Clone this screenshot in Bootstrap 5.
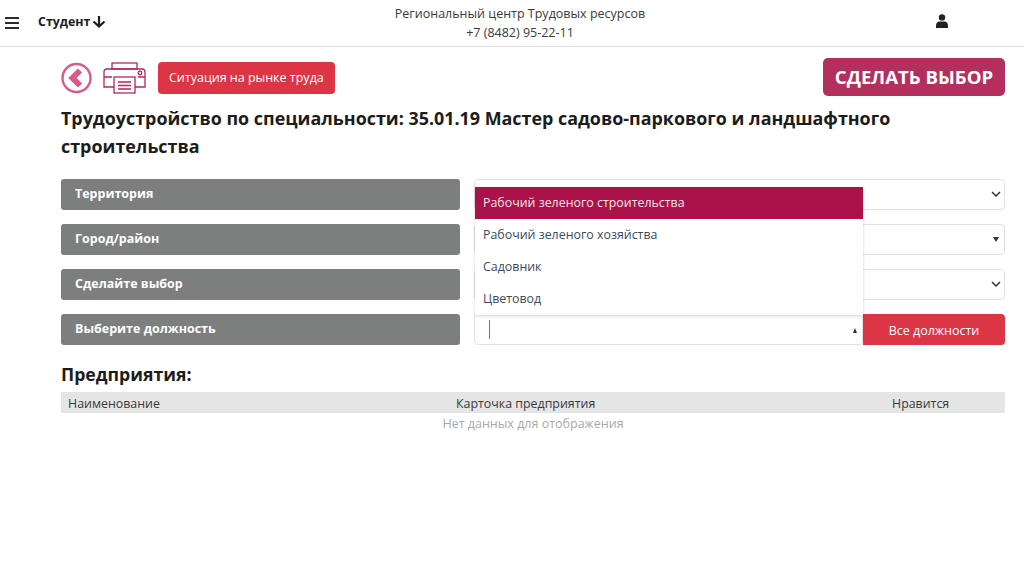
<!DOCTYPE html>
<html lang="ru">
<head>
<meta charset="utf-8">
<title>Трудоустройство</title>
<link href="https://cdn.jsdelivr.net/npm/bootstrap@5.3.0/dist/css/bootstrap.min.css" rel="stylesheet">
<style>
body{font-family:"Open Sans","Noto Sans",sans-serif;background:#fff;color:#212529;font-size:13px;overflow:hidden}
.topbar{height:47px;border-bottom:1px solid #dedede;padding:0 0 0 5px}
.burger{width:14px;margin-right:19px}
.student{font-weight:700;font-size:12.4px;color:#1c1c1c;width:66px;flex:none;white-space:nowrap;margin-top:-2px}
.arrow-down{margin-left:2px;flex:none}
.org{width:0;flex:1 1 auto;text-align:center;font-size:12.5px;line-height:19.500px;color:#3a3a3a;white-space:nowrap}
.usercell{width:88px;flex:none;margin-top:-5px}
.pagebox{padding:11px 19px 0 61px}
.toolrow{height:38px;margin-bottom:8px}
.gap-print{margin-left:11px}
.gap-sit{margin-left:11px}
.btn-sit{background:#dc3545;color:#fff;font-size:12.5px;padding:0 11px;height:32px;line-height:32px;border-radius:4px;border:0}
.btn-make{background:#b42e5e;color:#fff;font-weight:700;font-size:18.6px;height:38px;line-height:38px;padding:0;width:182px;border-radius:5px;border:0}
.title{font-size:17.9px;font-weight:700;line-height:28px;margin:0 0 19px;color:#1c1c1c}
.frow{height:31px;margin-bottom:14px}
.flabel{width:399px;background:#7d7e7e;color:#fff;font-weight:700;font-size:12.5px;border-radius:3px;padding:0 14px;line-height:29px;flex:none}
.fctl{margin-left:14px;flex:1 1 auto;border:1px solid #dfe2e5;border-radius:4px;background:#fff;position:relative}
.chev{position:absolute;right:3px;top:11px}
.tri{position:absolute;right:5px;top:12px;width:0;height:0;border-left:3px solid transparent;border-right:3px solid transparent;border-top:5px solid #333}
.fgroup{margin-left:14px;flex:1 1 auto;position:relative}
.combo{width:389px;height:31px;background:#fff;border:1px solid #dfe2e5;border-radius:0 0 4px 4px;position:relative;flex:none}
.caret{position:absolute;left:14px;top:5px;width:1px;height:19px;background:#777}
.triup{position:absolute;right:5px;top:13px;width:0;height:0;border-left:2.500px solid transparent;border-right:2.500px solid transparent;border-bottom:5px solid #333}
.btn-all{flex:1 1 auto;background:#dc3545;color:#fff;font-size:12.5px;border:0;border-radius:0 4px 4px 0;padding:3px 0 0}
.droplist{position:absolute;left:1px;bottom:30px;width:388px;background:#fff;box-shadow:0 1px 3px rgba(0,0,0,.18);z-index:5}
.dropit{height:32px;line-height:31px;padding:0 8px;font-size:12.4px;color:#3d4a5c}
.dropit-on{background:#ab1249;color:#f3e3ea;line-height:32px}
.subtitle{font-size:17.7px;font-weight:700;line-height:26px;margin:16px 0 5px;color:#1c1c1c}
.thead-bar{background:#e5e5e5;height:21px;line-height:23px;font-size:12.4px;color:#3a3a3a}
.th1{padding-left:7px;width:395px;flex:none}
.th2{width:436px;flex:none}
.nodata{text-align:center;color:#a9a9a9;font-size:12.5px;line-height:21px}
</style>
</head>
<body>
<nav class="topbar d-flex align-items-center">
  <svg class="burger flex-none" viewBox="0 0 14 12" height="12" aria-hidden="true"><path d="M0 1h14M0 6h14M0 11h14" stroke="#2a2a2a" stroke-width="2"/></svg>
  <div class="student d-flex align-items-center"><span>Студент</span>
    <svg class="arrow-down" width="14" height="13" viewBox="0 0 14 13" aria-hidden="true"><path d="M7 1v10M1.500 6.500L7 11.500l5.500-5" fill="none" stroke="#1c1c1c" stroke-width="2.200"/></svg>
  </div>
  <div class="org"><div>Региональный центр Трудовых ресурсов</div><div>+7 (8482) 95-22-11</div></div>
  <div class="usercell d-flex">
    <svg width="12" height="14" viewBox="0 0 12 14" aria-hidden="true"><circle cx="6" cy="3.400" r="3.200" fill="#222"/><path d="M0 14v-2.600C0 9 1.800 7.600 3.600 7.600h4.800C10.200 7.600 12 9 12 11.400V14z" fill="#222"/></svg>
  </div>
</nav>
<main class="pagebox">
  <div class="toolrow d-flex align-items-start justify-content-between">
    <div class="d-flex align-items-start pt-1">
      <svg width="31" height="32" viewBox="0 0 31 32" aria-hidden="true"><circle cx="15.500" cy="16" r="14" fill="#fff" stroke="#d75c8a" stroke-width="2.400"/><path d="M19 8.500L11.500 16 19 23.500" fill="none" stroke="#d75c8a" stroke-width="6"/></svg>
      <svg class="gap-print" width="44" height="32" viewBox="0 0 44 32" aria-hidden="true"><g fill="none" stroke="#b8255f" stroke-width="1.300"><rect x="9" y="1" width="25" height="6"/><path d="M11 25H1V10q0-3 3-3h35q3 0 3 3v15H32"/><path d="M1 15h8M35 15h7"/><rect x="11" y="15" width="21" height="16"/><path d="M15 20h13M15 23.500h13M15 27h13"/><circle cx="37" cy="11" r="1.800"/></g></svg>
      <button type="button" class="btn btn-sit gap-sit">Ситуация на рынке труда</button>
    </div>
    <button type="button" class="btn btn-make">СДЕЛАТЬ ВЫБОР</button>
  </div>
  <h1 class="title">Трудоустройство по специальности: 35.01.19 Мастер садово-паркового и ландшафтного строительства</h1>
  <div class="frow d-flex">
    <div class="flabel">Территория</div>
    <div class="fctl"><svg class="chev" width="10" height="7" viewBox="0 0 10 7" aria-hidden="true"><path d="M1 1l4 4 4-4" fill="none" stroke="#333" stroke-width="1.500"/></svg></div>
  </div>
  <div class="frow d-flex">
    <div class="flabel">Город/район</div>
    <div class="fctl"><span class="tri"></span></div>
  </div>
  <div class="frow d-flex">
    <div class="flabel">Сделайте выбор</div>
    <div class="fctl"><svg class="chev" width="10" height="7" viewBox="0 0 10 7" aria-hidden="true"><path d="M1 1l4 4 4-4" fill="none" stroke="#333" stroke-width="1.500"/></svg></div>
  </div>
  <div class="frow d-flex mb-0">
    <div class="flabel">Выберите должность</div>
    <div class="fgroup d-flex">
      <div class="droplist">
        <div class="dropit dropit-on">Рабочий зеленого строительства</div>
        <div class="dropit">Рабочий зеленого хозяйства</div>
        <div class="dropit">Садовник</div>
        <div class="dropit">Цветовод</div>
      </div>
      <div class="combo"><span class="caret"></span><span class="triup"></span></div>
      <button type="button" class="btn-all">Все должности</button>
    </div>
  </div>
  <h2 class="subtitle">Предприятия:</h2>
  <div class="thead-bar d-flex"><div class="th1">Наименование</div><div class="th2">Карточка предприятия</div><div>Нравится</div></div>
  <div class="nodata">Нет данных для отображения</div>
</main>
<script src="https://cdn.jsdelivr.net/npm/bootstrap@5.3.0/dist/js/bootstrap.bundle.min.js"></script>
</body>
</html>
